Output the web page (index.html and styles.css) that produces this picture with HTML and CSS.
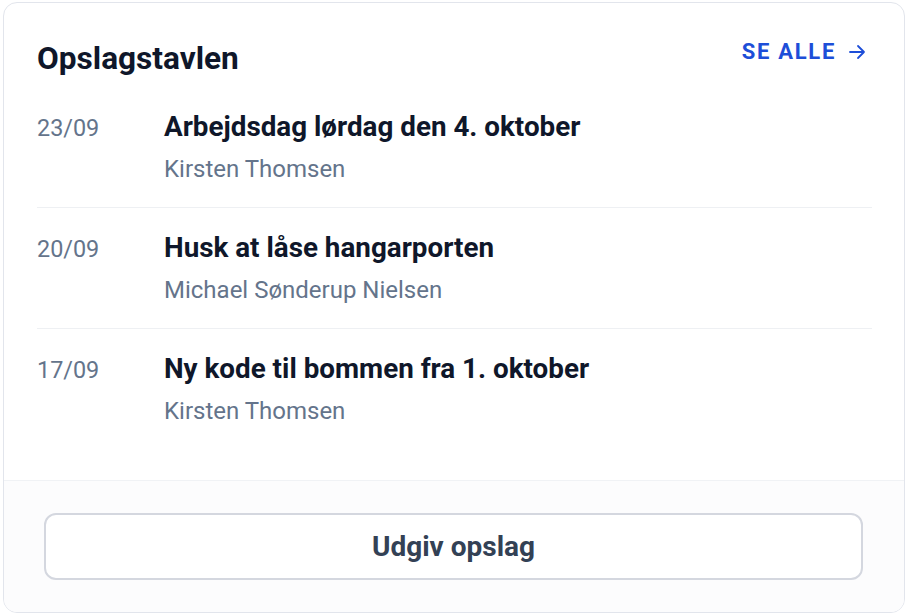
FILE: index.html
```html
<!DOCTYPE html>
<html lang="da">
    <head>
        <meta charset="UTF-8" />
        <meta name="viewport" content="width=device-width, initial-scale=1.0" />
        <title>Opslagstavlen</title>
        <link rel="stylesheet" href="styles.css">
    </head>
    <body>
        <section class="board">
            <header class="board-header">
                <h2 class="board-title">Opslagstavlen</h2>
                <a class="see-all" href="#">
                    SE ALLE
                    <svg width="20" height="20" viewBox="0 0 20 20" fill="none" stroke="currentColor" stroke-width="1.8" stroke-linecap="round" stroke-linejoin="round">
                        <path d="M3 10h14M11 4l6 6-6 6" />
                    </svg>
                </a>
            </header>

            <ul class="post-list">
                <li class="post">
                    <span class="post-date">23/09</span>
                    <div class="post-body">
                        <div class="post-title">Arbejdsdag lørdag den 4. oktober</div>
                        <div class="post-author">Kirsten Thomsen</div>
                    </div>
                </li>
                <li class="post">
                    <span class="post-date">20/09</span>
                    <div class="post-body">
                        <div class="post-title">Husk at låse hangarporten</div>
                        <div class="post-author">Michael Sønderup Nielsen</div>
                    </div>
                </li>
                <li class="post">
                    <span class="post-date">17/09</span>
                    <div class="post-body">
                        <div class="post-title">Ny kode til bommen fra 1. oktober</div>
                        <div class="post-author">Kirsten Thomsen</div>
                    </div>
                </li>
            </ul>

            <footer class="board-footer">
                <button class="publish-btn">Udgiv opslag</button>
            </footer>
        </section>
    </body>
</html>
```

FILE: styles.css
```css
html,
body {
    margin: 0;
    background: #ffffff;
}

body {
    padding: 2px 3px;
    font-family: Roboto, "Liberation Sans", sans-serif;
    color: #0f172a;
}

.board {
    width: 902px;
    height: 611px;
    box-sizing: border-box;
    border: 1px solid #e2e5ec;
    border-radius: 14px;
    background: #ffffff;
    display: flex;
    flex-direction: column;
    overflow: hidden;
}

/* Header */
.board-header {
    display: flex;
    justify-content: space-between;
    align-items: flex-start;
    padding: 38px 37px 0 33px;
}

.board-title {
    margin: 0;
    font-size: 31.6px;
    line-height: 36px;
    font-weight: 700;
    color: #0f172a;
}

.see-all {
    display: flex;
    align-items: center;
    gap: 11px;
    margin-top: -1px;
    font-size: 22px;
    line-height: 24px;
    font-weight: 700;
    letter-spacing: 1.7px;
    color: #1d4ed8;
    text-decoration: none;
}

/* List */
.post-list {
    list-style: none;
    margin: 10px 32px 0 33px;
    padding: 0;
    flex: 1;
}

.post {
    display: flex;
    align-items: baseline;
    padding: 24px 0;
    border-bottom: 1px solid #eef0f3;
}

.post:last-child {
    border-bottom: none;
}

.post-date {
    width: 127px;
    flex-shrink: 0;
    font-size: 23.4px;
    color: #64748b;
}

.post-title {
    font-size: 27.8px;
    line-height: 32px;
    font-weight: 700;
    color: #0f172a;
}

.post-author {
    margin-top: 12px;
    font-size: 24px;
    line-height: 28px;
    color: #64748b;
}

/* Footer */
.board-footer {
    border-top: 1px solid #f0f2f5;
    background: #fcfcfd;
    padding: 32px 41px 32px 40px;
}

.publish-btn {
    display: block;
    width: 100%;
    height: 67px;
    border: 2px solid #d4d7df;
    border-radius: 12px;
    background: #ffffff;
    font-family: inherit;
    font-size: 28px;
    font-weight: 700;
    color: #334155;
    cursor: pointer;
}
```
